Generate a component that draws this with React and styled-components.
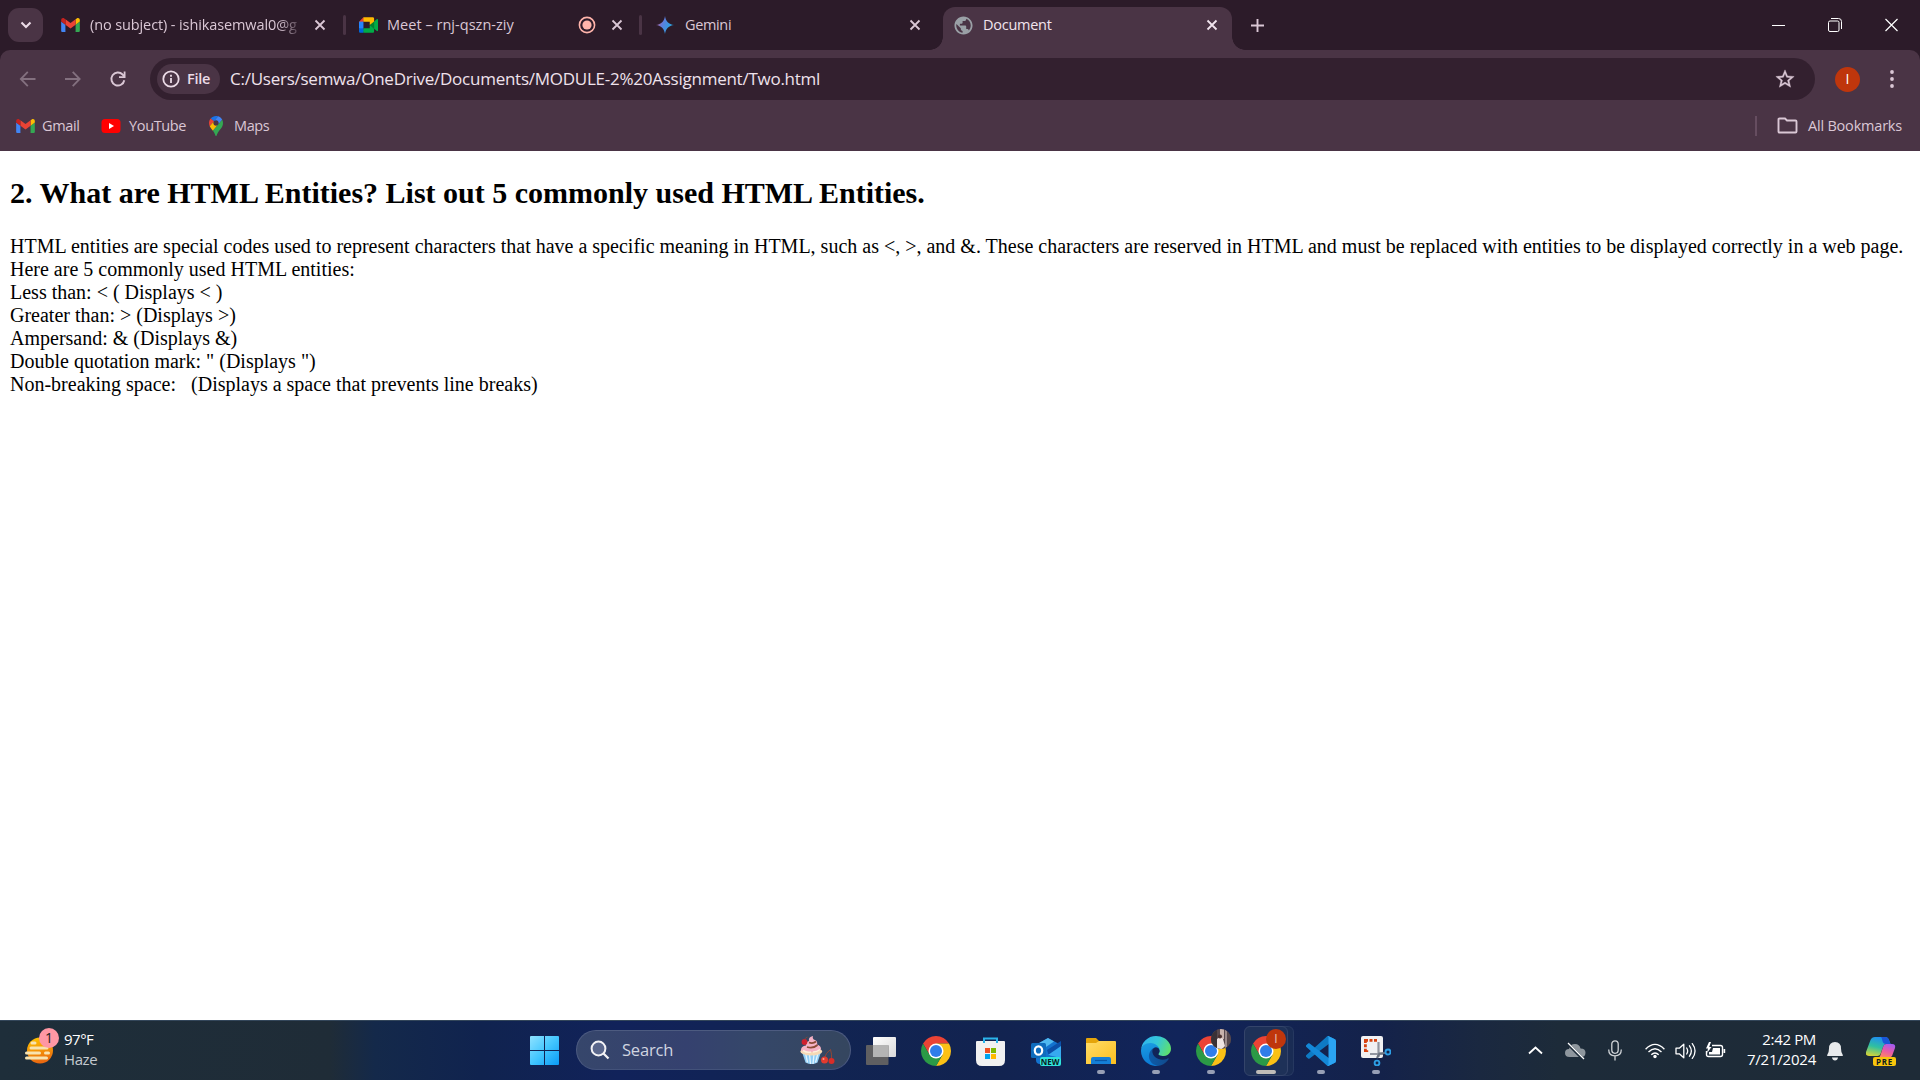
import React from "react";
import styled, { createGlobalStyle } from "styled-components";

const ui = `"Open Sans", "Noto Sans", sans-serif`;

const GlobalStyle = createGlobalStyle`
  * { box-sizing: border-box; }
  html, body { margin: 0; padding: 0; background: #fff; overflow: hidden; }
`;

const Screen = styled.div`
  width: 1920px;
  height: 1080px;
  display: flex;
  flex-direction: column;
  background: #fff;
  overflow: hidden;
`;

const Label = styled.span`
  font-family: ${ui};
  font-size: ${(p) => p.$size || 14.5}px;
  letter-spacing: ${(p) => p.$track || 0}px;
  line-height: 20px;
  color: ${(p) => p.$color || "#dac7d5"};
  white-space: nowrap;
  font-weight: ${(p) => p.$weight || 400};
`;

/* ---------- tab strip ---------- */

const TabStrip = styled.header`
  height: 50px;
  flex: none;
  display: flex;
  align-items: stretch;
  background: #2c1b29;
`;

const TabSearch = styled.button`
  width: 35px;
  height: 34px;
  margin: 8px 4px 0 8px;
  padding: 0;
  border: 0;
  border-radius: 11px;
  background: #4a3445;
  display: flex;
  align-items: center;
  justify-content: center;
`;

const Tab = styled.div`
  position: relative;
  width: ${(p) => p.$width}px;
  height: ${(p) => (p.$active ? 43 : 34)}px;
  margin-top: ${(p) => (p.$active ? 7 : 8)}px;
  padding: 0 ${(p) => p.$right}px ${(p) => (p.$active ? 7 : 0)}px ${(p) => p.$left}px;
  display: flex;
  align-items: center;
  border-radius: 12px 12px 0 0;
  background: ${(p) => (p.$active ? "#4a3445" : "transparent")};
  &::before, &::after {
    content: "";
    display: ${(p) => (p.$active ? "block" : "none")};
    position: absolute;
    bottom: 0;
    width: 13px;
    height: 13px;
  }
  &::before {
    left: -13px;
    background: radial-gradient(circle at 0 0, transparent 12.5px, #4a3445 13px);
  }
  &::after {
    right: -13px;
    background: radial-gradient(circle at 100% 0, transparent 12.5px, #4a3445 13px);
  }
`;

const TabTitle = styled.div`
  flex: 1;
  min-width: 0;
  height: 20px;
  margin-left: ${(p) => p.$gap || 11}px;
  display: flex;
  -webkit-mask-image: ${(p) => (p.$fade ? "linear-gradient(90deg, #000 188px, transparent 214px)" : "none")};
`;

const TabDivider = styled.span`
  width: 3px;
  height: 20px;
  margin-top: 15px;
  border-radius: 2px;
  background: #4a3445;
`;

const NewTab = styled.div`
  width: 50px;
  height: 50px;
  display: flex;
  align-items: center;
  justify-content: center;
`;

const WindowButtons = styled.div`
  margin-left: auto;
  display: flex;
  align-items: center;
  padding: 0 22px 1px 0;
  gap: 43px;
`;

/* ---------- toolbar ---------- */

const ToolbarBack = styled.div`
  background: #2c1b29;
  flex: none;
`;

const Toolbar = styled.div`
  height: 101px;
  border-radius: 10px 10px 0 0;
  background: #4a3445;
`;

const NavRow = styled.div`
  display: flex;
  align-items: center;
  padding: 8px 24px 0 18px;
  height: 50px;
`;

const NavIcons = styled.div`
  display: flex;
  align-items: center;
  gap: 25px;
  width: 132px;
`;

const Omnibox = styled.div`
  width: 1665px;
  height: 42px;
  border-radius: 21px;
  background: #33202f;
  display: flex;
  align-items: center;
  padding: 0 19px 0 7px;
`;

const SchemeChip = styled.div`
  width: 63px;
  height: 30px;
  border-radius: 15px;
  background: #4a3445;
  display: flex;
  align-items: center;
  padding-left: 5px;
  gap: 7px;
  margin-right: 10px;
`;

const Push = styled.span`
  margin-left: auto;
  display: flex;
  align-items: center;
`;

const Avatar = styled.div`
  width: 25px;
  height: 25px;
  border-radius: 50%;
  margin-left: 20px;
  background: #bf360c;
  display: flex;
  align-items: center;
  justify-content: center;
`;

const BookmarkRow = styled.div`
  display: flex;
  align-items: center;
  height: 51px;
  padding: 0 18px 0 16px;
`;

const Bookmark = styled.div`
  display: flex;
  align-items: center;
  height: 24px;
  gap: ${(p) => p.$gap}px;
  width: ${(p) => p.$width || "auto"};
`;

const BarDivider = styled.span`
  width: 2px;
  height: 20px;
  background: #664d60;
  margin-right: 20px;
`;

/* ---------- document ---------- */

const Page = styled.main`
  flex: 1;
  padding: 25px 10px 0;
  background: #fff;
  color: #000;
  font-family: "Liberation Serif", serif;
  font-size: 20px;
  line-height: 23px;
`;

const Heading = styled.h2`
  margin: 0 0 25px;
  font-size: 30px;
  line-height: 34px;
  font-weight: 700;
`;

const Copy = styled.p`
  margin: 0;
  white-space: nowrap;
`;

/* ---------- taskbar ---------- */

const Taskbar = styled.footer`
  height: 60px;
  flex: none;
  display: flex;
  align-items: stretch;
  border-top: 1px solid #33465a;
  background: linear-gradient(90deg, #1e2e3a 0, #1f2c37 330px, #14294a 375px, #10234f 480px, #11225a 620px, #112452 800px, #122350 1000px, #11245a 1180px, #14224a 1380px, #1a2840 1480px, #1d2b39 1560px, #1e2b37 100%);
`;

const Weather = styled.div`
  width: 526px;
  display: flex;
  align-items: center;
  padding-left: 24px;
`;

const Stack = styled.div`
  display: flex;
  flex-direction: column;
  align-items: ${(p) => p.$align || "flex-start"};
  padding-bottom: 4px;
`;

const SearchBox = styled.div`
  width: 275px;
  height: 40px;
  margin: 9px 2px 0 13px;
  border-radius: 20px;
  border: 1px solid #4d5b80;
  border-bottom-color: #43527a;
  background: linear-gradient(90deg, #36466b, #35416f 40%, #354769 65%, #35465f);
  display: flex;
  align-items: center;
  padding: 0 15px 0 13px;
`;

const AppSlot = styled.div`
  position: relative;
  width: ${(p) => p.$width || 55}px;
  height: 59px;
  display: flex;
  align-items: center;
  justify-content: center;
  &::after {
    content: "";
    display: ${(p) => (p.$mark ? "block" : "none")};
    position: absolute;
    bottom: 6px;
    left: calc(50% - ${(p) => (p.$mark || 0) / 2}px);
    width: ${(p) => p.$mark || 0}px;
    height: 4px;
    border-radius: 2px;
    background: ${(p) => (p.$mark > 10 ? "#bfbcb8" : "#979fb5")};
  }
`;

const ActivePlate = styled.div`
  width: 44px;
  height: 50px;
  border-radius: 6px;
  border: 1px solid #34446a;
  background: #1e3158;
  box-shadow: 6px 0 0 -1px #1a2c54, 6px 0 0 0 #263860;
  display: flex;
  align-items: center;
  justify-content: center;
`;

const Badge = styled.span`
  position: absolute;
  width: 20px;
  height: 20px;
  border-radius: 50%;
  left: ${(p) => p.$x}px;
  top: ${(p) => p.$y}px;
  background: ${(p) => p.$bg};
  display: flex;
  align-items: center;
  justify-content: center;
  overflow: hidden;
  z-index: 1;
`;

const WeatherIcon = styled.div`
  position: relative;
  width: 40px;
  height: 40px;
`;

const Tray = styled.div`
  margin-left: auto;
  display: flex;
  align-items: center;
  padding-right: 24px;
`;

const Gap = styled.span`
  width: ${(p) => p.$w}px;
  flex: none;
`;

/* ---------- icons ---------- */

const Svg = styled.svg`
  display: block;
  flex: none;
`;

const GmailIcon = () => (
  <Svg width="19" height="14" viewBox="52 42 88 66">
    <path fill="#4285f4" d="M58 108h14V74L52 59v43c0 3.32 2.69 6 6 6" />
    <path fill="#34a853" d="M120 108h14c3.32 0 6-2.69 6-6V59l-20 15" />
    <path fill="#fbbc04" d="M120 48v26l20-15v-8c0-7.42-8.47-11.65-14.4-7.2" />
    <path fill="#ea4335" d="M72 74V48l24 18 24-18v26L96 92" />
    <path fill="#c5221f" d="M52 51v8l20 15V48l-5.6-4.2c-5.94-4.45-14.4-.22-14.4 7.2" />
  </Svg>
);

const MeetIcon = () => (
  <Svg width="19" height="16" viewBox="0 0 87.5 72">
    <path fill="#00832d" d="M49.5 36l8.53 9.75 11.47 7.33 2-17.02-2-16.64-11.69 6.44z" />
    <path fill="#0066da" d="M0 51.5V66c0 3.315 2.685 6 6 6h14.5l3-10.96-3-9.54-9.95-3z" />
    <path fill="#e94235" d="M20.5 0L0 20.5l10.55 3 9.95-3 2.95-9.41z" />
    <path fill="#2684fc" d="M20.5 20.5H0v31h20.5z" />
    <path fill="#00ac47" d="M82.6 8.68L69.5 19.42v33.66l13.16 10.79c1.97 1.54 4.85.135 4.85-2.37V11c0-2.535-2.945-3.925-4.91-2.32zM49.5 36v15.5h-29V72h43c3.315 0 6-2.685 6-6V53.08z" />
    <path fill="#ffba00" d="M63.5 0h-43v20.5h29V36l20-16.57V6c0-3.315-2.685-6-6-6z" />
  </Svg>
);

const GeminiIcon = () => (
  <Svg width="18" height="18" viewBox="0 0 24 24">
    <defs>
      <linearGradient id="gem" x1="0" x2="1" y1="0.2" y2="0.6">
        <stop offset="0.1" stopColor="#b0649a" />
        <stop offset="0.4" stopColor="#5c7fe0" />
        <stop offset="0.8" stopColor="#2f9fe0" />
      </linearGradient>
    </defs>
    <path fill="url(#gem)" d="M12 0C12.8 6.8 17.2 11.2 24 12 17.2 12.8 12.8 17.2 12 24 11.2 17.2 6.8 12.8 0 12 6.8 11.2 11.2 6.8 12 0z" />
  </Svg>
);

const GlobeIcon = () => (
  <Svg width="19" height="19" viewBox="1.500 1.500 21 21">
    <path fill="#9aa0a6" d="M12 2C6.48 2 2 6.48 2 12s4.48 10 10 10 10-4.48 10-10S17.52 2 12 2zm-1 17.93c-3.95-.49-7-3.85-7-7.93 0-.62.08-1.21.21-1.79L9 15v1c0 1.1.9 2 2 2v1.93zm6.9-2.54c-.26-.81-1-1.39-1.9-1.39h-1v-3c0-.55-.45-1-1-1H8v-2h2c.55 0 1-.45 1-1V7h2c1.1 0 2-.9 2-2v-.41c2.93 1.19 5 4.06 5 7.41 0 2.08-.8 3.97-2.1 5.39z" />
  </Svg>
);

const CloseIcon = ({ color = "#dac7d5" }) => (
  <Svg width="12" height="12" viewBox="0 0 12 12">
    <path d="M1.5 1.5l9 9M10.5 1.5l-9 9" stroke={color} strokeWidth="1.800" />
  </Svg>
);

const RecordIcon = () => (
  <Svg width="18" height="18" viewBox="0 0 18 18">
    <circle cx="9" cy="9" r="7.600" fill="none" stroke="#ffb4ab" strokeWidth="1.600" />
    <circle cx="9" cy="9" r="4.600" fill="#ffb4ab" />
  </Svg>
);

const YouTubeIcon = () => (
  <Svg width="20" height="20" viewBox="0 0 20 20">
    <rect x="0.500" y="3" width="19" height="14" rx="3.500" fill="#f00" />
    <path d="M8 7l5 3-5 3z" fill="#fff" />
  </Svg>
);

const MapsIcon = () => (
  <Svg width="14" height="20" viewBox="0 0 92.300 132.300">
    <path fill="#1a73e8" d="M60.2 2.2C55.8.8 51 0 46.1 0 32 0 19.3 6.4 10.8 16.5l21.8 18.3L60.2 2.2z" />
    <path fill="#ea4335" d="M10.8 16.5C4.1 24.5 0 34.9 0 46.1c0 8.7 1.7 15.7 4.6 22l28-33.3-21.8-18.3z" />
    <path fill="#4285f4" d="M46.2 28.5c9.8 0 17.7 7.9 17.7 17.7 0 4.3-1.6 8.3-4.2 11.4 0 0 13.9-16.6 27.5-32.7-5.6-10.8-15.3-19-27-22.7L32.6 34.8c3.3-3.8 8.1-6.3 13.6-6.3" />
    <path fill="#fbbc04" d="M46.2 63.8c-9.8 0-17.7-7.9-17.7-17.7 0-4.3 1.5-8.3 4.1-11.3l-28 33.3c4.8 10.6 12.8 19.2 21 29.9l34.1-40.5c-3.3 3.9-8.1 6.3-13.5 6.3" />
    <path fill="#34a853" d="M59.1 109.2c15.4-24.1 33.3-35 33.3-63 0-7.7-1.9-14.9-5.2-21.3L25.6 98c2.6 3.4 5.3 7.3 7.9 11.3 9.4 14.5 6.8 23.1 12.8 23.1s3.4-8.7 12.8-23.2" />
  </Svg>
);

const ChromeIcon = () => (
  <Svg width="30" height="30" viewBox="-24 -24 48 48">
    <path fill="#ea4335" d="M20.78-12A24 24 0 0 0-20.78-12L-10.39 6 0 0V-12z" />
    <path fill="#fbc116" d="M20.78-12A24 24 0 0 1 0 24L10.39 6 0 0V-12z" />
    <path fill="#2b9a46" d="M0 24A24 24 0 0 1-20.78-12L-10.39 6 0 0 10.39 6z" />
    <circle r="12" fill="#fff" />
    <circle r="9.600" fill="#2f7de9" />
  </Svg>
);

const StartIcon = () => (
  <Svg width="29" height="29" viewBox="0 0 29 29">
    <defs>
      <linearGradient id="win" x1="0" y1="0" x2="29" y2="29" gradientUnits="userSpaceOnUse">
        <stop offset="0" stopColor="#8fe2ff" />
        <stop offset="0.500" stopColor="#43c6ff" />
        <stop offset="1" stopColor="#0a9bf7" />
      </linearGradient>
    </defs>
    <path fill="url(#win)" d="M1 0h13v14H0V1a1 1 0 0 1 1-1zM15 0h13a1 1 0 0 1 1 1v13H15zM0 15h14v14H1a1 1 0 0 1-1-1zM15 15h14v13a1 1 0 0 1-1 1H15z" />
  </Svg>
);

const CupcakeIcon = () => (
  <Svg width="36" height="30" viewBox="0 0 36 30">
    <path d="M3 17h19l-3.500 10.500q-6 3-12 0z" fill="#8fcdf5" />
    <path d="M6.500 18l2 9.500M10.500 19l1 10M15 19l-1 10M19 18l-2.500 9.500" stroke="#e2f4ff" strokeWidth="1.300" />
    <ellipse cx="12.300" cy="16.500" rx="11" ry="4" fill="#f6d9b5" />
    <path d="M2 15q0-4 5-4.500-1-3.500 3-4.500Q9 2 14 1q-1 3 2 4 3 1.500 2 4.500 4 1 4 4.500-1 3-10 3T2 15z" fill="#f4b2c6" />
    <path d="M8 12q6 2 10.500-2M10 7.500q4 1.500 7-1" stroke="#8a4a35" strokeWidth="1.800" fill="none" />
    <path d="M4 15.500q4 2.500 8 1.500M14 17q4 0 7-2.500" stroke="#fdf0dc" strokeWidth="1.500" fill="none" />
    <circle cx="5.500" cy="7" r="2.900" fill="#cf2030" />
    <path d="M5.500 4.500q1-2 3-2.500" stroke="#7c4b35" strokeWidth="0.900" fill="none" />
    <path d="M25.500 23q1-5 6-8.500Q33 19 32.500 24" stroke="#8f4636" strokeWidth="1" fill="none" />
    <circle cx="25.500" cy="25" r="3.500" fill="#e23b2e" />
    <circle cx="32.500" cy="26" r="3" fill="#d92d28" />
    <circle cx="24.500" cy="24" r="1" fill="#ff9c8c" />
  </Svg>
);

const TaskViewIcon = () => (
  <Svg width="30" height="30" viewBox="0 0 30 30">
    <defs>
      <linearGradient id="tv" x1="0" y1="0" x2="1" y2="1">
        <stop offset="0" stopColor="#fff" />
        <stop offset="1" stopColor="#d9d9d9" />
      </linearGradient>
    </defs>
    <rect x="7" y="1" width="23" height="20" rx="1" fill="url(#tv)" />
    <rect x="0" y="9" width="22.500" height="20" rx="1" fill="#5f5f61" />
    <path d="M7 9h15.500v12H7z" fill="#b4b4b4" />
  </Svg>
);

const StoreIcon = () => (
  <Svg width="29" height="30" viewBox="0 0 29 30">
    <path d="M0 6q0-1 1-1h27q1 0 1 1v18q0 6-6 6H6q-6 0-6-6z" fill="#f1f1f1" />
    <path d="M8 7V2.500h13V7" fill="none" stroke="#2bb4ea" strokeWidth="2" />
    <path d="M9 12h5v5H9z" fill="#f25022" />
    <path d="M15 12h5v5h-5z" fill="#7fba00" />
    <path d="M9 18h5v5H9z" fill="#00a4ef" />
    <path d="M15 18h5v5h-5z" fill="#ffb900" />
  </Svg>
);

const TaggedIcon = styled.div`
  position: relative;
  width: 30px;
  height: 30px;
  display: flex;
`;

const CornerTag = styled.span`
  position: absolute;
  right: 0;
  bottom: 0;
  width: ${(p) => p.$width}px;
  height: 9px;
  border-radius: 2px;
  background: ${(p) => p.$bg};
  font: 700 8px/9px ${ui};
  letter-spacing: ${(p) => p.$track || 0}px;
  color: #0a1a20;
  text-align: center;
`;

const OutlookIcon = () => (
  <TaggedIcon>
    <Svg width="30" height="30" viewBox="0 0 30 30">
      <path d="M5 9L17 2l13 7v15q0 4-4 4H9q-4 0-4-4z" fill="#1373cf" />
      <path d="M8 7l9-5 6 3.500L12 13z" fill="#4fb8f0" />
      <path d="M16 14l14-9v6l-12 9z" fill="#0b4fa8" />
      <path d="M17 19l13-9v12z" fill="#37aaf0" />
      <rect x="0" y="7" width="15" height="15" rx="1.500" fill="#0f6cbd" />
      <ellipse cx="7.500" cy="14.500" rx="3.700" ry="4.200" fill="none" stroke="#fff" strokeWidth="2.200" />
    </Svg>
    <CornerTag $width={21} $bg="#2fe3dc">NEW</CornerTag>
  </TaggedIcon>
);

const FolderIcon = () => (
  <Svg width="30" height="30" viewBox="0 0 30 30">
    <defs>
      <linearGradient id="fold" x1="0" y1="0" x2="1" y2="1">
        <stop offset="0" stopColor="#ffdc68" />
        <stop offset="1" stopColor="#fcbf1e" />
      </linearGradient>
    </defs>
    <path d="M0 3q0-1 1-1h9l3 3v5H0z" fill="#e5a50a" />
    <path d="M0 7h10l3-2h16q1 0 1 1v22H0z" fill="url(#fold)" />
    <path d="M5 28v-5q0-2 2-2h16q2 0 2 2v5z" fill="#157fd6" />
    <path d="M9 24.500h12" stroke="#0a57a5" strokeWidth="1.200" />
  </Svg>
);

const EdgeIcon = () => (
  <Svg width="30" height="30" viewBox="0 0 256 256">
    <defs>
      <linearGradient id="ed1" x1="0" x2="1">
        <stop offset="0" stopColor="#0d5cab" />
        <stop offset="1" stopColor="#114a8b" />
      </linearGradient>
      <linearGradient id="ed2" x1="0.300" y1="0" x2="0.500" y2="1">
        <stop offset="0" stopColor="#1b9de2" />
        <stop offset="1" stopColor="#0a78d4" />
      </linearGradient>
      <linearGradient id="ed3" x1="0" y1="0.300" x2="1" y2="0.600">
        <stop offset="0" stopColor="#2fb4ee" />
        <stop offset="0.500" stopColor="#35c7d8" />
        <stop offset="1" stopColor="#5fe06c" />
      </linearGradient>
    </defs>
    <path fill="url(#ed1)" d="M231 190.500c-3.400 1.800-6.900 3.400-10.500 4.700a101.300 101.300 0 0 1-35.800 6.500c-47.100 0-88.200-32.400-88.200-74a31.400 31.400 0 0 1 16.400-27.300c-42.600 1.800-53.600 46.200-53.600 72.200 0 73.600 67.800 81 82.400 81 7.900 0 19.800-2.300 27-4.600l1.300-.4a128.300 128.300 0 0 0 66.600-52.800 4 4 0 0 0-5.600-5.300z" />
    <path fill="url(#ed2)" d="M105.700 241.400A79.200 79.200 0 0 1 83 220a80.700 80.700 0 0 1 29.500-120c3.200-1.500 8.500-4.100 15.600-4a32.400 32.400 0 0 1 25.700 13 31.900 31.900 0 0 1 6.300 18.700c0-.2 24.500-79.600-80-79.600-43.900 0-80 41.700-80 78.200a130.200 130.200 0 0 0 12.100 56 128 128 0 0 0 156.400 67 75.500 75.500 0 0 1-62.800-8z" />
    <path fill="url(#ed3)" d="M152.300 148.900c-.9 1-3.400 2.500-3.400 5.600 0 2.600 1.700 5.200 4.800 7.300 14.300 10 41.400 8.600 41.500 8.600a59.600 59.600 0 0 0 30.300-8.300 61.400 61.400 0 0 0 30.400-52.900c.3-22.400-8-37.300-11.300-43.900C223.500 23.900 177.700 0 128 0A128 128 0 0 0 0 126.200c.5-36.500 36.800-66 80-66 3.500 0 23.500.3 42 10a72.600 72.600 0 0 1 30.900 29.300c6.100 10.600 7.200 24.100 7.200 29.500s-2.700 13.300-7.800 19.900z" />
  </Svg>
);

const CodeIcon = () => (
  <Svg width="30" height="30" viewBox="0 0 100 100">
    <path fill="#0e7ac4" d="M96.500 10.800L75.900.9c-2.400-1.100-5.200-.7-7.100 1.200L1.300 63.600c-1.800 1.700-1.800 4.500 0 6.200l5.500 5c1.500 1.300 3.700 1.400 5.300.2l81.300-61.600c2.700-2.100 6.600-.1 6.600 3.300v-.3c0-2.400-1.400-4.600-3.500-5.600z" />
    <path fill="#1488d8" d="M96.500 89.200l-20.600 9.900c-2.400 1.100-5.200.7-7.100-1.200L1.300 36.400c-1.800-1.700-1.800-4.500 0-6.200l5.500-5c1.500-1.300 3.700-1.400 5.300-.2l81.300 61.600c2.700 2.100 6.600.1 6.600-3.300v.3c0 2.400-1.400 4.600-3.500 5.600z" />
    <path fill="#2ba4f2" d="M75.900 99.100c-2.400 1.100-5.300.7-7.100-1.200 2.300 2.300 6.200.7 6.200-2.600V4.700c0-3.300-3.900-4.900-6.200-2.600C70.600.2 73.500-.3 75.900.9l20.600 9.900c2.100 1 3.500 3.200 3.500 5.600v67.200c0 2.400-1.400 4.600-3.500 5.600z" />
  </Svg>
);

const SnipIcon = () => (
  <Svg width="30" height="30" viewBox="0 0 30 30">
    <rect x="0" y="0" width="22" height="22" rx="2" fill="#f1f1f3" />
    <path d="M3 3h4v2.800H5.800V7H3zM8.500 3h3v2.800h-3zM13 3h3v2.800h-3zM3 8.300h2.800v3H3zM3 12.700h2.800v1.500h1.400V16H3z" fill="#d8420f" />
    <path d="M17.500 6v15M9 18h13" stroke="#9296a0" strokeWidth="2.200" />
    <path d="M16 22l2.500-4.500L24 17" stroke="#6d7480" strokeWidth="2.200" fill="none" />
    <circle cx="27" cy="16" r="2.500" fill="none" stroke="#2d9fe6" strokeWidth="1.900" />
    <circle cx="16" cy="27" r="2.400" fill="none" stroke="#2d9fe6" strokeWidth="1.900" />
  </Svg>
);

const PhotoAvatar = () => (
  <Svg width="20" height="20" viewBox="0 0 20 20">
    <rect width="20" height="20" fill="#57484c" />
    <path d="M0 0h6v20H0z" fill="#3a3136" />
    <path d="M9 0h4v10H9z" fill="#c9b3ac" />
    <path d="M14 0h2v20h-2z" fill="#9c8b8b" />
    <path d="M6 10q3-3 6 0l2 7-3 3H6z" fill="#f0e4e2" />
    <circle cx="9" cy="7.500" r="2" fill="#4b3230" />
  </Svg>
);

const HazeIcon = () => (
  <Svg width="32" height="40" viewBox="0 -6 32 40">
    <defs>
      <linearGradient id="sun" x1="0" y1="0" x2="0.200" y2="1">
        <stop offset="0" stopColor="#ffc800" />
        <stop offset="1" stopColor="#ea6a10" />
      </linearGradient>
    </defs>
    <circle cx="16" cy="13.500" r="13" fill="url(#sun)" />
    <path d="M8 6h3M7 11h16M2.500 16h13M21.500 16h3M2.500 21h20" stroke="#f8e3b0" strokeWidth="3" strokeLinecap="round" />
  </Svg>
);

const CopilotIcon = () => (
  <TaggedIcon>
    <Svg width="30" height="30" viewBox="0 0 30 30">
      <defs>
        <linearGradient id="cp1" x1="0.500" y1="0" x2="0.200" y2="1">
          <stop offset="0" stopColor="#1f8ef0" />
          <stop offset="0.500" stopColor="#2fc0a0" />
          <stop offset="1" stopColor="#d9d435" />
        </linearGradient>
        <linearGradient id="cp2" x1="0.700" y1="0" x2="0.300" y2="1">
          <stop offset="0" stopColor="#a45cf0" />
          <stop offset="0.500" stopColor="#e85aa8" />
          <stop offset="1" stopColor="#ff8a5c" />
        </linearGradient>
      </defs>
      <path d="M9 1h10q3 0 4 3l1.500 4h-4.500q-2 0-3 3l-2.500 7q-.8 2-3 2H3q-4 0-3-4L4.500 4Q5.800 1 9 1z" fill="url(#cp1)" />
      <path d="M15 1h4q3 0 4 3l1.500 4H20q-3 0-3.500-3T15 1z" fill="#1b56d8" />
      <path d="M20 8h6q4 0 3 4l-3 8q-1 2-4 2h-9l1.500-3 2.500-8q1-3 3-3z" fill="url(#cp2)" />
    </Svg>
    <CornerTag $width={23} $bg="#f8c50c" $track={0.7}>PRE</CornerTag>
  </TaggedIcon>
);

/* ---------- app ---------- */

const lines = [
  "HTML entities are special codes used to represent characters that have a specific meaning in HTML, such as <, >, and &. These characters are reserved in HTML and must be replaced with entities to be displayed correctly in a web page.",
  "Here are 5 commonly used HTML entities:",
  "Less than: < ( Displays < )",
  "Greater than: > (Displays >)",
  "Ampersand: & (Displays &)",
  'Double quotation mark: " (Displays ")',
  "Non-breaking space: \u00a0 (Displays a space that prevents line breaks)",
];

const fg = "#dac7d5";

export default function App() {
  return (
    <Screen>
      <GlobalStyle />
      <TabStrip>
        <TabSearch>
          <Svg width="12" height="8" viewBox="0 0 12 8"><path d="M1.500 1.500L6 6l4.500-4.500" fill="none" stroke="#ecdbe7" strokeWidth="2.100" /></Svg>
        </TabSearch>
        <Tab $width={296} $left={14} $right={17}>
          <GmailIcon />
          <TabTitle $gap={10} $fade><Label $track={-0.11}>(no subject) - ishikasemwal0@g</Label></TabTitle>
          <Gap $w={11} /><CloseIcon />
        </Tab>
        <TabDivider />
        <Tab $width={293} $left={13} $right={16}>
          <MeetIcon />
          <TabTitle $gap={9}><Label $track={0.03}>Meet – rnj-qszn-ziy</Label></TabTitle>
          <RecordIcon /><Gap $w={15} /><CloseIcon />
        </Tab>
        <TabDivider />
        <Tab $width={301} $left={14} $right={22}>
          <GeminiIcon />
          <TabTitle><Label $track={-0.35}>Gemini</Label></TabTitle>
          <CloseIcon />
        </Tab>
        <Tab $active $width={289} $left={11} $right={14}>
          <GlobeIcon />
          <TabTitle $gap={10}><Label $track={-0.26} $color="#f1e4ee">Document</Label></TabTitle>
          <CloseIcon color="#f1e4ee" />
        </Tab>
        <NewTab>
          <Svg width="13" height="13" viewBox="0 0 13 13"><path d="M6.500 0v13M0 6.500h13" stroke={fg} strokeWidth="1.900" /></Svg>
        </NewTab>
        <WindowButtons>
          <Svg width="13" height="14" viewBox="0 0 13 14"><path d="M0 7.500h13" stroke="#fff" /></Svg>
          <Svg width="14" height="14" viewBox="0 0 14 14"><rect x="0.500" y="3" width="10.500" height="10.500" rx="1.500" fill="none" stroke="#fff" /><path d="M3 .5h7.500q3 0 3 3V11" fill="none" stroke="#fff" /></Svg>
          <Svg width="13" height="14" viewBox="0 0 13 14"><path d="M.5 1l12 12M12.500 1l-12 12" stroke="#fff" strokeWidth="1.200" /></Svg>
        </WindowButtons>
      </TabStrip>
      <ToolbarBack>
        <Toolbar>
          <NavRow>
            <NavIcons>
              <Svg width="20" height="20" viewBox="0 0 20 20"><path d="M17.500 10H3M9.800 2.800L2.800 10l7 7.200" fill="none" stroke="#83707f" strokeWidth="1.800" /></Svg>
              <Svg width="20" height="20" viewBox="0 0 20 20"><path d="M2 10h14.500M9.700 2.800l7 7.200-7 7.200" fill="none" stroke="#83707f" strokeWidth="1.800" /></Svg>
              <Svg width="20" height="20" viewBox="0 0 20 20"><path d="M16.300 11.200A6.500 6.500 0 1 1 14.600 5.500L16.500 7.500" fill="none" stroke={fg} strokeWidth="1.900" /><path d="M17.500 2.500v6.500H11V7.200h4.700V2.500z" fill={fg} /></Svg>
            </NavIcons>
            <Omnibox>
              <SchemeChip>
                <Svg width="18" height="18" viewBox="0 0 18 18"><circle cx="9" cy="9" r="7.700" fill="none" stroke="#ecdbe7" strokeWidth="1.800" /><path d="M9 8v5M9 4.800v1.900" stroke="#ecdbe7" strokeWidth="1.800" /></Svg>
                <Label $size={14.5} $track={-0.3} $weight={600} $color="#ecdbe7">File</Label>
              </SchemeChip>
              <Label $size={17} $track={-0.25} $color="#efe2ec">C:/Users/semwa/OneDrive/Documents/MODULE-2%20Assignment/Two.html</Label>
              <Push>
                <Svg width="22" height="22" viewBox="0 0 24 24"><path fill={fg} stroke={fg} strokeWidth="0.400" d="M22 9.240l-7.190-.620L12 2 9.190 8.630 2 9.240l5.460 4.730L5.820 21 12 17.270 18.180 21l-1.630-7.030L22 9.240zM12 15.400l-3.760 2.270 1-4.280-3.320-2.880 4.380-.380L12 6.100l1.710 4.040 4.380.380-3.320 2.880 1 4.280L12 15.400z" /></Svg>
              </Push>
            </Omnibox>
            <Avatar><Label $size={14} $color="#fff">I</Label></Avatar>
            <Push>
              <Svg width="8" height="20" viewBox="0 0 8 20"><g fill={fg}><circle cx="4" cy="3" r="1.900" /><circle cx="4" cy="10" r="1.900" /><circle cx="4" cy="17" r="1.900" /></g></Svg>
            </Push>
          </NavRow>
          <BookmarkRow>
            <Bookmark $gap={7} $width="85px"><GmailIcon /><Label $track={-0.38}>Gmail</Label></Bookmark>
            <Bookmark $gap={8} $width="108px"><YouTubeIcon /><Label $track={-0.35}>YouTube</Label></Bookmark>
            <Bookmark $gap={11}><MapsIcon /><Label $track={-0.4}>Maps</Label></Bookmark>
            <Push>
              <BarDivider />
              <Bookmark $gap={10}>
                <Svg width="21" height="17" viewBox="0 0 21 17"><path d="M1.500 14.500v-12q0-1 1-1h5.500l2 2h8.500q1 0 1 1v10q0 1-1 1h-16q-1 0-1-1z" fill="none" stroke={fg} strokeWidth="1.900" /></Svg>
                <Label $track={-0.2}>All Bookmarks</Label>
              </Bookmark>
            </Push>
          </BookmarkRow>
        </Toolbar>
      </ToolbarBack>
      <Page>
        <Heading>2. What are HTML Entities? List out 5 commonly used HTML Entities.</Heading>
        {lines.map((line) => <Copy key={line}>{line}</Copy>)}
      </Page>
      <Taskbar>
        <Weather>
          <WeatherIcon>
            <HazeIcon />
            <Badge $x={15} $y={-3} $bg="#ff97a4"><Label $size={14} $color="#1c1c1c">1</Label></Badge>
          </WeatherIcon>
          <Stack>
            <Label $size={15} $track={-0.5} $color="#fff">97°F</Label>
            <Label $size={15} $track={-0.4} $color="#c4c9cf">Haze</Label>
          </Stack>
        </Weather>
        <Gap $w={4} />
        <AppSlot $width={29}><StartIcon /></AppSlot>
        <Gap $w={4} />
        <SearchBox>
          <Svg width="20" height="20" viewBox="0 0 20 20"><circle cx="8.500" cy="8.500" r="6.900" fill="#5a678c" stroke="#f2f2f5" strokeWidth="2" /><path d="M13.500 13.500L18.500 18.500" stroke="#f2f2f5" strokeWidth="2.300" /></Svg>
          <Gap $w={12} />
          <Label $size={16.5} $track={-0.2} $color="#d0d5e0">Search</Label>
          <Push><CupcakeIcon /></Push>
        </SearchBox>
        <AppSlot><TaskViewIcon /></AppSlot>
        <AppSlot><ChromeIcon /></AppSlot>
        <AppSlot><StoreIcon /></AppSlot>
        <AppSlot><OutlookIcon /></AppSlot>
        <AppSlot $mark={8}><FolderIcon /></AppSlot>
        <AppSlot $mark={8}><EdgeIcon /></AppSlot>
        <AppSlot $mark={8}><ChromeIcon /><Badge $x={28} $y={8} $bg="#57484c"><PhotoAvatar /></Badge></AppSlot>
        <AppSlot $mark={20}><ActivePlate><ChromeIcon /></ActivePlate><Badge $x={28} $y={8} $bg="#bf360c"><Label $size={12} $color="#e9c7ba">I</Label></Badge></AppSlot>
        <AppSlot $mark={8}><CodeIcon /></AppSlot>
        <AppSlot $mark={8}><SnipIcon /></AppSlot>
        <Tray>
          <Svg width="15" height="9" viewBox="0 0 15 9"><path d="M1 7.500L7.500 1.500 14 7.500" fill="none" stroke="#fff" strokeWidth="1.800" /></Svg>
          <Gap $w={22} />
          <Svg width="21" height="18" viewBox="0 0 21 18"><path d="M4.500 15q-4.500 0-4.500-4t4-4q1-5 6-5 4.500 0 5.500 4.500 5 0 5 4.300T16 15z" fill="#8e969d" /><path d="M2 1l16 16" stroke="#1d2b39" strokeWidth="3" /><path d="M3 1l16 16" stroke="#fff" strokeWidth="1.300" /></Svg>
          <Gap $w={22} />
          <Svg width="14" height="21" viewBox="0 0 14 21"><rect x="3.800" y="0.800" width="6.400" height="12.500" rx="3.200" fill="none" stroke="#cfd3d7" strokeWidth="1.300" /><path d="M.7 9.500q0 6.300 6.300 6.300t6.300-6.300M7 16v4.500" fill="none" stroke="#cfd3d7" strokeWidth="1.300" /></Svg>
          <Gap $w={23} />
          <Svg width="20" height="16" viewBox="0 0 20 16"><g fill="none" stroke="#fff" strokeWidth="1.400"><path d="M.6 6.200q9.400-9.600 18.800 0M3.500 9q6.500-6.600 13 0M6.300 11.700q3.700-3.600 7.400 0" /></g><circle cx="10" cy="13.500" r="1.700" fill="#fff" /></Svg>
          <Gap $w={10} />
          <Svg width="21" height="18" viewBox="0 0 21 18"><path d="M1 6.200v5.600h3.300l4.500 4V2.200l-4.500 4z" fill="none" stroke="#fff" strokeWidth="1.300" strokeLinejoin="round" /><path d="M11.700 6q1.900 3 0 6M14.500 3.800q3.700 5.200 0 10.400M17.300 1.600q5.500 7.400 0 14.800" fill="none" stroke="#fff" strokeWidth="1.300" strokeLinecap="round" /></Svg>
          <Gap $w={9} />
          <Svg width="21" height="18" viewBox="0 0 21 18"><path d="M7 3.500h8.500q2 0 2 2v7q0 2-2 2h-12q-2 0-2-2V9" fill="none" stroke="#fff" strokeWidth="1.400" /><path d="M8 6h7v6.500H4V10h3z" fill="#fff" /><path d="M18.500 7h1.700v4h-1.700z" fill="#fff" /><path d="M4 0L1 6.500h2L2 11l4.500-6H4.200L6 0z" fill="#fff" /></Svg>
          <Gap $w={21} />
          <Stack $align="flex-end">
            <Label $size={15} $track={-0.35} $color="#fff">2:42 PM</Label>
            <Label $size={15} $track={-0.22} $color="#fff">7/21/2024</Label>
          </Stack>
          <Gap $w={11} />
          <Svg width="16" height="20" viewBox="0 0 16 20"><path d="M8 1q6 0 6 6.500 0 4 1.700 6.300.5 1.200-.7 1.200H1q-1.200 0-.7-1.200Q2 11.500 2 7.500 2 1 8 1z" fill="#e8eaec" /><path d="M5 16.500h6q-.5 3-3 3t-3-3z" fill="#e8eaec" /></Svg>
          <Gap $w={23} />
          <CopilotIcon />
        </Tray>
      </Taskbar>
    </Screen>
  );
}
